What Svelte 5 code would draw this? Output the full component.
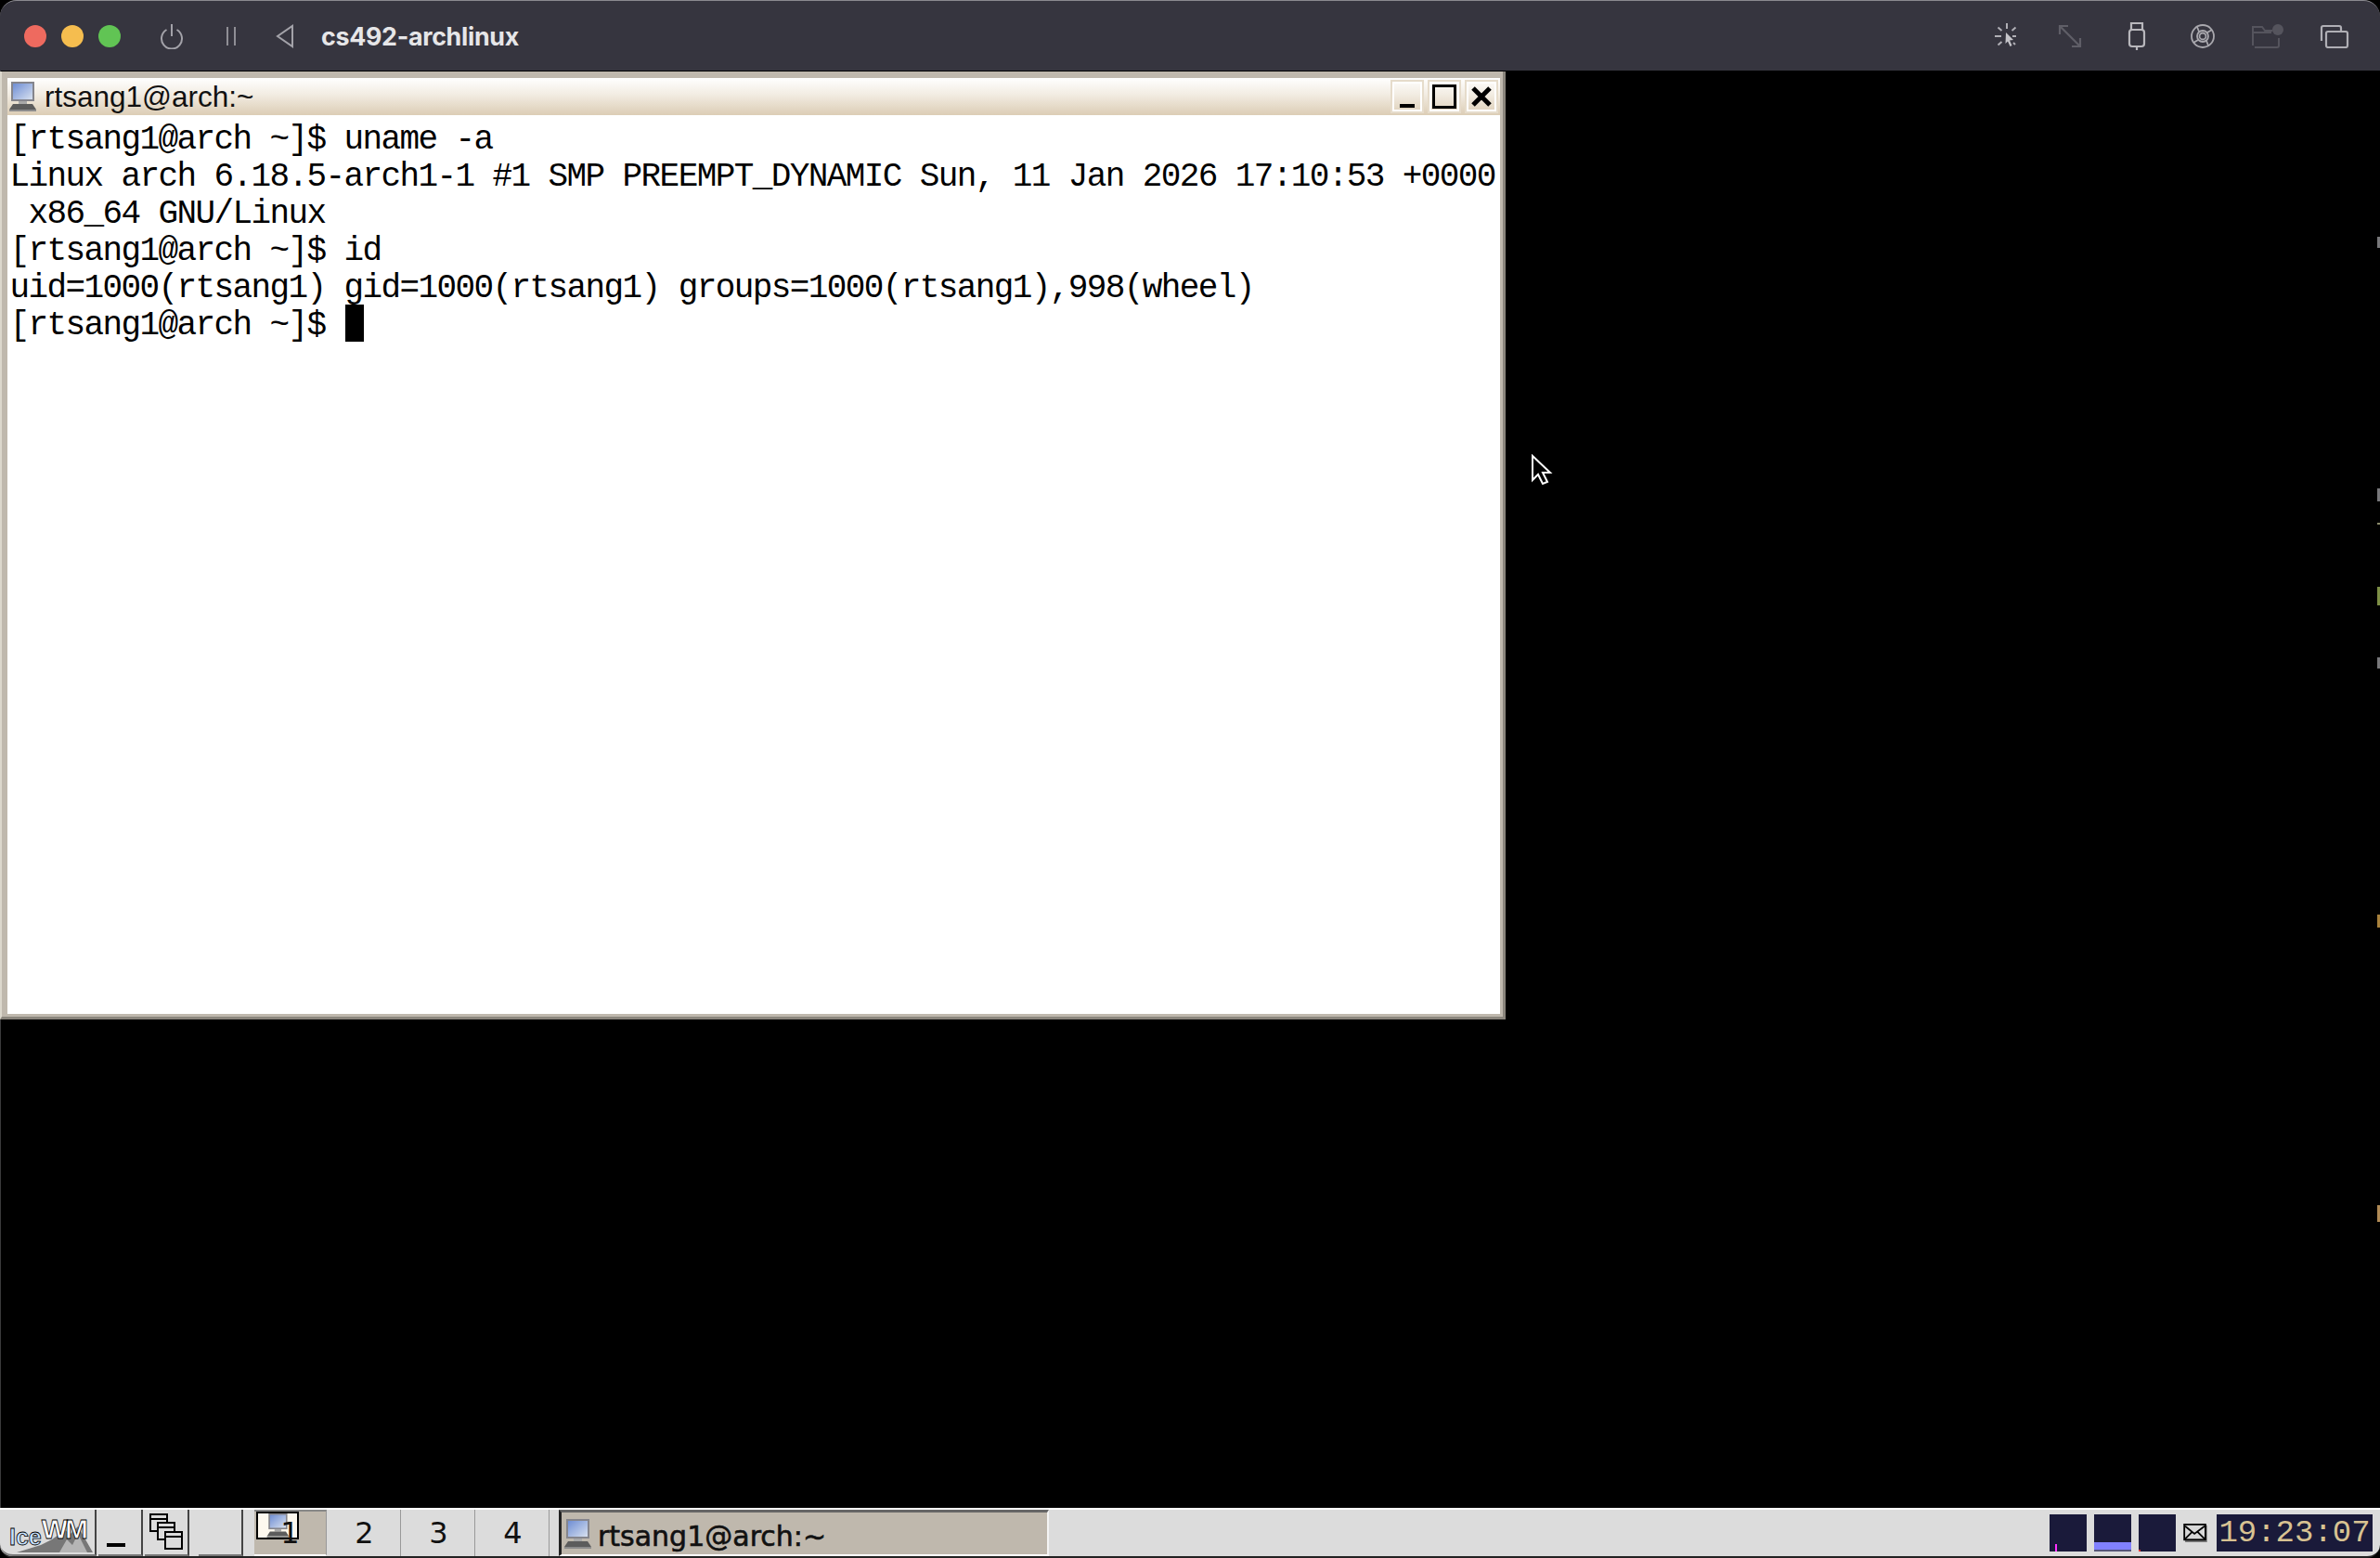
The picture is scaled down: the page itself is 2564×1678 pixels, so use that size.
<script lang="ts">
	// Parallels-style VM window with an IceWM desktop inside it
	const lines = [
		'[rtsang1@arch ~]$ uname -a',
		'Linux arch 6.18.5-arch1-1 #1 SMP PREEMPT_DYNAMIC Sun, 11 Jan 2026 17:10:53 +0000',
		' x86_64 GNU/Linux',
		'[rtsang1@arch ~]$ id',
		'uid=1000(rtsang1) gid=1000(rtsang1) groups=1000(rtsang1),998(wheel)',
		'[rtsang1@arch ~]$ '
	];
	const marks = [
		{ y: 255, h: 12, c: '#77777a' },
		{ y: 526, h: 14, c: '#77777a' },
		{ y: 563, h: 2, c: '#8a8a6a' },
		{ y: 632, h: 20, c: '#7d8f45' },
		{ y: 708, h: 12, c: '#77777a' },
		{ y: 985, h: 14, c: '#a8813c' },
		{ y: 1298, h: 18, c: '#b08a55' }
	];
</script>

{#snippet computer(size)}
	<svg class="computer" width={size} height={size} viewBox="0 0 32 32">
		<defs>
			<linearGradient id="scr" x1="0" y1="0" x2="1" y2="1">
				<stop offset="0" stop-color="#6f8ed4" />
				<stop offset="1" stop-color="#d7e0ef" />
			</linearGradient>
		</defs>
		<rect x="4" y="0" width="25" height="21" fill="#85858c" />
		<rect x="6" y="2" width="21" height="17" fill="url(#scr)" />
		<rect x="12" y="21" width="9" height="3" fill="#a8a8a8" />
		<path d="M6 24h21l4 6H2z" fill="#5c5c5c" />
		<path d="M2 30h29v2H2z" fill="#8c8c8c" />
	</svg>
{/snippet}

<div class="vm">
	<header class="mac-bar">
		<div class="lights">
			<span class="light red"></span>
			<span class="light yellow"></span>
			<span class="light green"></span>
		</div>
		<svg class="power" width="28" height="28" viewBox="0 0 28 28" fill="none" stroke="#a3a2a9" stroke-width="2">
			<path d="M8.5 7a11 11 0 1 0 11 0" />
			<path d="M14 1v13" />
		</svg>
		<svg class="pause" width="12" height="24" viewBox="0 0 12 24" fill="none" stroke="#8f8e95" stroke-width="2">
			<path d="M2 2v20M10 2v20" />
		</svg>
		<svg class="back" width="20" height="26" viewBox="0 0 20 26" fill="none" stroke="#a3a2a9" stroke-width="2">
			<path d="M18 2v22L2 13z" />
		</svg>
		<span class="vm-name">cs492-archlinux</span>
		<div class="right-tools">
			<svg class="rt" width="30" height="30" viewBox="0 0 30 30" fill="none" stroke="#b0afb5" stroke-width="2">
				<path d="M15 1v6M2 15h7M25 15h-4M5.5 5.5l4 3.5M24.500 5.500l-4 3.500M5.500 24.500l4-3.500M24 24l-2-2" />
				<path d="M14 11l8 8-4 .5 2.500 5.500-2 1-2.500-5.500-2.500 2.500z" fill="#c6c5ca" stroke="none" />
			</svg>
			<svg class="rt" width="26" height="26" viewBox="0 0 26 26" fill="none" stroke="#5f5e67" stroke-width="2.200">
				<path d="M2 2l22 22M2 11V2h9M24 15v9h-9" />
			</svg>
			<svg class="rt" width="20" height="32" viewBox="0 0 20 32" fill="none" stroke="#b8b7bc" stroke-width="2.200">
				<path d="M4 9V2h12v7" />
				<rect x="2" y="9" width="16" height="18" rx="3" />
				<path d="M10 27v4" />
			</svg>
			<svg class="rt" width="28" height="28" viewBox="0 0 28 28" fill="none" stroke="#a9a8ae" stroke-width="1.800">
				<circle cx="14" cy="14" r="12" />
				<circle cx="14" cy="14" r="3.500" />
				<circle cx="14" cy="14" r="6" />
				<path d="M9 18l-5 3M19 10l5-3M10 9l-2-5M18 19l2 5" />
			</svg>
			<svg class="rt" width="34" height="26" viewBox="0 0 34 26" fill="none" stroke="#55545d" stroke-width="2">
				<path d="M1 23V3h10l3 4h8M1 9h20M29 15v8a2 2 0 0 1-2 2H3" />
				<circle cx="28" cy="6" r="6" fill="#55545d" stroke="none" />
			</svg>
			<svg class="rt" width="32" height="26" viewBox="0 0 32 26" fill="none" stroke="#b0afb5" stroke-width="2.200">
				<path d="M2 18V4a2 2 0 0 1 2-2h17a2 2 0 0 1 2 2v3" />
				<rect x="7" y="8" width="23" height="17" rx="2" fill="#36353f" />
			</svg>
		</div>
	</header>

	<main class="desktop">
		<section class="xwin">
			<div class="frame-top">
				<div class="titlebar">
					{@render computer(32)}
					<span class="xtitle">rtsang1@arch:~</span>
					<div class="xbtns">
						<span class="xbtn"><i class="min"></i></span>
						<span class="xbtn"><i class="max"></i></span>
						<span class="xbtn">
							<svg width="24" height="24" viewBox="0 0 24 24" stroke="#000" stroke-width="5" fill="none">
								<path d="M3 3l18 18M21 3L3 21" />
							</svg>
						</span>
					</div>
				</div>
			</div>
			<div class="term">
				{#each lines as line, i}
					<div class="row">{line}{#if i === lines.length - 1}<span class="caret"></span>{/if}</div>
				{/each}
			</div>
		</section>

		<svg class="pointer" width="24" height="34" viewBox="0 0 24 34">
			<path d="M2 2v26l6-6 5 10 5-2-5-10h8z" fill="#000" stroke="#fff" stroke-width="2" />
		</svg>

		{#each marks as m}
			<span class="mark" style="top: {m.y - 76}px; height: {m.h}px; background: {m.c}"></span>
		{/each}
	</main>

	<footer class="taskbar">
		<div class="tb-btn logo">
			<svg class="peak" width="92" height="36" viewBox="0 0 92 36">
				<path d="M6 34l26-8 12-6 14-10 6 4 8-8 16 28z" fill="#777" />
				<path d="M52 34l8-14 6 6 6-12 10 20z" fill="#b5b5b5" />
			</svg>
			<span class="ice">Ice</span><span class="wm">WM</span>
		</div>
		<div class="tb-btn small"><i class="tb-min"></i></div>
		<div class="tb-btn small">
			<svg width="36" height="40" viewBox="0 0 36 40" fill="#dcdcdc" stroke="#000" stroke-width="2">
				<rect x="1" y="1" width="18" height="18" />
				<path d="M1 6h18" />
				<rect x="9" y="10" width="18" height="18" />
				<path d="M9 15h18" />
				<rect x="17" y="20" width="18" height="18" />
				<path d="M17 25h18" />
			</svg>
		</div>
		<div class="tb-btn small blank"></div>
		<div class="workspaces">
			<div class="ws active">
				<span class="pager">{@render computer(26)}</span>
				<span class="num">1</span>
			</div>
			<div class="ws"><span class="num">2</span></div>
			<div class="ws"><span class="num">3</span></div>
			<div class="ws"><span class="num">4</span></div>
		</div>
		<div class="task">
			{@render computer(32)}
			<span class="task-title">rtsang1@arch:~</span>
		</div>
		<div class="tray">
			<div class="graph"><i class="cpu"></i></div>
			<div class="graph"><i class="net"></i></div>
			<div class="graph"><i class="dsk"></i></div>
			<svg class="mail" width="26" height="20" viewBox="0 0 28 22">
				<rect x="2" y="2" width="26" height="20" fill="#777" />
				<rect x="1" y="1" width="25" height="18" fill="#d8d8d8" stroke="#000" stroke-width="2" />
				<path d="M2 3l11 9L25 3M2 18l8-8M25 18l-8-8" fill="none" stroke="#000" stroke-width="2" />
			</svg>
			<div class="clock">19:23:07</div>
		</div>
	</footer>
</div>

<style>
	:global(body) {
		margin: 0;
		background: #000;
	}

	.vm {
		width: 2564px;
		height: 1678px;
		display: flex;
		flex-direction: column;
		background: #000;
		overflow: hidden;
	}

	/* Mac title bar */
	.mac-bar {
		height: 75px;
		flex: none;
		display: flex;
		align-items: center;
		background: #36353f;
		border-top: 1px solid #8b8a90;
		border-radius: 18px 18px 0 0;
		font-family: 'Inter', 'Liberation Sans', sans-serif;
	}

	.lights {
		display: flex;
		gap: 16px;
		margin-left: 26px;
	}

	.light {
		width: 24px;
		height: 24px;
		border-radius: 50%;
	}

	.red { background: #ee6a5f; }
	.yellow { background: #f5bd4f; }
	.green { background: #61c454; }

	.power { margin-left: 41px; }
	.pause { margin-left: 44px; }
	.back { margin-left: 42px; }

	.vm-name {
		margin-left: 29px;
		color: #e6e6e8;
		font-size: 26.800px;
		font-weight: 700;
		letter-spacing: -0.3px;
	}

	.right-tools {
		margin-left: auto;
		margin-right: 33px;
		display: flex;
		align-items: center;
	}

	.rt:nth-child(2) { margin-left: 40px; }
	.rt:nth-child(3) { margin-left: 49px; }
	.rt:nth-child(4) { margin-left: 47px; }
	.rt:nth-child(5) { margin-left: 39px; }
	.rt:nth-child(6) { margin-left: 39px; }

	/* Desktop and the xterm window */
	.desktop {
		flex: 1;
		position: relative;
		background: #000;
		border-left: 1px solid #3a3a3c;
		min-height: 0;
	}

	.xwin {
		position: absolute;
		left: -1px;
		top: 1px;
		width: 1622px;
		height: 1021px;
		box-sizing: border-box;
		display: flex;
		flex-direction: column;
		background: #bfb8ad;
		border-right: 3px solid #8a857c;
		border-bottom: 3px solid #8a857c;
		border-left: 2px solid #dcd8cd;
	}

	.frame-top {
		padding: 7px 3px 0 6px;
	}

	.titlebar {
		height: 40px;
		display: flex;
		align-items: center;
		background: linear-gradient(#ffffff, #f2ece2 45%, #dccdb5);
	}

	.computer {
		flex: none;
		display: block;
	}

	.xtitle {
		margin-left: 8px;
		font-family: 'Liberation Sans', sans-serif;
		font-size: 31.500px;
		color: #111;
	}

	.xbtns {
		margin-left: auto;
		display: flex;
		gap: 4px;
		padding-right: 2px;
	}

	.xbtn {
		width: 36px;
		height: 36px;
		box-sizing: border-box;
		border: 2px solid #e6dccb;
		outline: 2px solid #fff;
		outline-offset: -4px;
		display: flex;
		align-items: center;
		justify-content: center;
		position: relative;
	}

	.min {
		position: absolute;
		left: 8px;
		bottom: 4px;
		width: 16px;
		height: 4px;
		background: #000;
	}

	.max {
		width: 20px;
		height: 20px;
		border: 3px solid #000;
		box-sizing: content-box;
	}

	.term {
		flex: 1;
		margin: 0 3px 3px 6px;
		padding: 4px 4px 0 2.500px;
		background: #fff;
		color: #000;
		font-family: 'Liberation Mono', monospace;
		font-size: 36px;
		letter-spacing: -1.6px;
		white-space: pre;
	}

	.row {
		height: 40px;
		line-height: 45px;
	}

	.caret {
		display: inline-block;
		width: 20px;
		height: 40px;
		margin-left: 1.500px;
		background: #000;
		vertical-align: top;
	}

	.pointer {
		position: absolute;
		left: 1648px;
		top: 413px;
	}

	.mark {
		position: absolute;
		right: 0;
		width: 3px;
	}

	/* IceWM taskbar */
	.taskbar {
		height: 54px;
		flex: none;
		box-sizing: border-box;
		display: flex;
		align-items: stretch;
		background: #dcdcdc;
		border-top: 2px solid #fff;
		border-bottom: 2px solid #222;
		border-radius: 0 0 14px 14px;
		font-family: 'DejaVu Sans', sans-serif;
		color: #111;
	}

	.tb-btn {
		position: relative;
		box-sizing: border-box;
		display: flex;
		align-items: center;
		justify-content: center;
		border-right: 2px solid #444;
		border-bottom: 2px solid #777;
	}

	.logo {
		width: 104px;
		border-radius: 0 0 0 14px;
		overflow: hidden;
	}

	.ice {
		position: relative;
		font: 700 25px 'Liberation Sans', sans-serif;
		color: #c6e2ff;
		-webkit-text-stroke: 0.8px #000;
		margin-top: 10px;
	}

	.wm {
		position: relative;
		font: 700 30px 'Liberation Sans', sans-serif;
		letter-spacing: -3px;
		color: #fff;
		-webkit-text-stroke: 0.8px #000;
		margin-top: -6px;
	}

	.peak {
		position: absolute;
		left: 12px;
		bottom: 0;
	}

	.small {
		width: 48px;
		margin-left: 2px;
	}

	.small:nth-child(2) .tb-min {
		margin-left: -8px;
	}

	.blank {
		margin-left: 10px;
	}

	.tb-min {
		width: 20px;
		height: 4px;
		background: #000;
		margin-top: 28px;
	}

	.workspaces {
		display: flex;
		gap: 2px;
		margin-left: 12px;
	}

	.ws {
		position: relative;
		box-sizing: border-box;
		width: 78px;
		display: flex;
		align-items: center;
		justify-content: center;
		font-size: 32px;
		border-right: 1px solid #999;
	}

	.ws.active {
		background: #bfb8ad;
		border-top: 2px solid #888;
		border-bottom: 2px solid #fff;
	}

	.pager {
		position: absolute;
		left: 2px;
		top: 0;
		width: 46px;
		height: 30px;
		box-sizing: border-box;
		background: #fdf8ee;
		border: 2px solid #000;
		display: flex;
		justify-content: center;
	}

	.num {
		position: relative;
	}

	.task {
		width: 528px;
		margin-left: 10px;
		box-sizing: border-box;
		display: flex;
		align-items: center;
		gap: 6px;
		padding-left: 1px;
		background: #bfb8ad;
		border-left: 3px solid #222;
		border-top: 3px solid #666;
		border-right: 2px solid #f4f4f4;
		border-bottom: 2px solid #fff;
		font-size: 30px;
		-webkit-text-stroke: 0.6px #111;
	}

	.task-title {
		margin-top: 5px;
	}

	.tray {
		margin-left: auto;
		margin-right: 8px;
		display: flex;
		align-items: center;
		gap: 8px;
	}

	.graph {
		position: relative;
		width: 40px;
		height: 40px;
		background: #1a1a3a;
	}

	.graph i {
		position: absolute;
		bottom: 0;
	}

	.cpu {
		left: 6px;
		width: 2px;
		height: 8px;
		background: #ff30ff;
	}

	.net {
		left: 0;
		width: 40px;
		height: 10px;
		background: #8080ff;
		box-shadow: inset 0 -2px 0 #55557a;
	}

	.dsk {
		left: 0;
		width: 2px;
		height: 2px;
		background: #e03030;
	}

	.clock {
		width: 168px;
		height: 40px;
		margin-left: 2px;
		background: #1a1a3a;
		color: #d8c292;
		font-family: 'Liberation Mono', monospace;
		font-size: 34px;
		line-height: 40px;
		text-align: center;
	}
</style>
